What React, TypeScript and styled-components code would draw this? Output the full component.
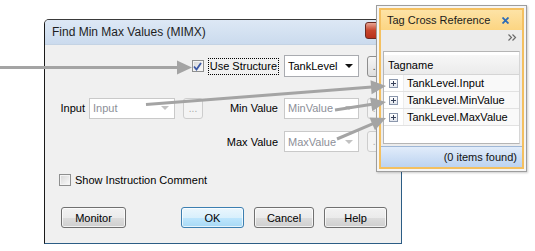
import React from 'react'
import styled, { createGlobalStyle } from 'styled-components'

const GlobalStyle = createGlobalStyle`
  *, *::before, *::after {
    box-sizing: border-box;
  }
  html, body {
    margin: 0;
    padding: 0;
    background: #fff;
  }
  body {
    font-family: "Liberation Sans", Arial, sans-serif;
    font-size: 11px;
    color: #000;
  }
`

const Desktop = styled.div`
  position: relative;
  width: 535px;
  height: 251px;
  overflow: hidden;
  background: #fff;
`

const Dialog = styled.div`
  margin: 19px 0 0 44px;
  width: 358px;
  height: 225px;
  border: 1px solid #2c5d85;
  border-left-color: #1a1a1a;
  border-top-color: #3a3a3a;
  border-radius: 5px 5px 0 0;
  background: #f0f0f0;
  display: flex;
  flex-direction: column;
  overflow: hidden;
`

const TitleBar = styled.div`
  height: 25px;
  flex: none;
  display: flex;
  align-items: center;
  justify-content: space-between;
  padding-left: 7px;
  background: linear-gradient(#dde8f5, #cbdbee);
  border-bottom: 1px solid #c4d3e4;
`

const TitleText = styled.span`
  font-size: 12px;
  color: #1e1e1e;
`

const CloseBox = styled.div`
  width: 30px;
  height: 17px;
  margin: -4px 6px 0 0;
  border: 1px solid #6b2a22;
  border-radius: 3px;
  background: linear-gradient(#e8a493, #c7452c 50%, #b8321c);
`

const Fields = styled.div`
  padding: 10px 14px 0 0;
`

const FieldRow = styled.div<{ $gap: number; $height: number }>`
  display: grid;
  grid-template-columns: 44px 86px 8px 20px 1fr 75px 8px 20px;
  height: ${p => p.$height}px;
  margin-top: ${p => p.$gap}px;
  align-items: center;
`

const Label = styled.span`
  justify-self: end;
  padding-right: 6px;
  white-space: nowrap;
`

const InputLabel = styled(Label)`
  padding-right: 4px;
`

const StructureCheck = styled.label`
  grid-column: 1 / 6;
  justify-self: end;
  margin-right: 5px;
  display: flex;
  align-items: center;
  gap: 4px;
`

const Focused = styled.span`
  border: 1px dotted #000;
  padding: 0 1px;
  line-height: 15px;
`

const Box = styled.span`
  width: 12px;
  height: 12px;
  flex: none;
  border: 1px solid #8e8f8f;
  background: linear-gradient(135deg, #d6d6d6, #fbfbfb);
  box-shadow: inset 0 0 0 1px #f4f4f4;
  display: flex;
  align-items: center;
  justify-content: center;
`

const Combo = styled.div<{ $disabled?: boolean }>`
  height: ${p => (p.$disabled ? 21 : 22)}px;
  width: 100%;
  border: 1px solid ${p => (p.$disabled ? '#c9c9c9' : '#a9abb0')};
  background: #fff;
  display: flex;
  align-items: center;
  justify-content: space-between;
  padding: 0 5px 0 3px;
  color: ${p => (p.$disabled ? '#8d8f98' : '#000')};
`

const Caret = styled.span<{ $disabled?: boolean }>`
  width: 0;
  height: 0;
  border-left: 4px solid transparent;
  border-right: 4px solid transparent;
  border-top: 4px solid ${p => (p.$disabled ? '#c2c2c2' : '#111')};
`

const Ellipsis = styled.div<{ $disabled?: boolean }>`
  width: 20px;
  height: 21px;
  border: 1px solid ${p => (p.$disabled ? '#cdcdcd' : '#8e8e8e')};
  border-radius: 3px;
  background: ${p => (p.$disabled ? '#f4f4f4' : 'linear-gradient(#f6f6f6, #dedede)')};
  color: ${p => (p.$disabled ? '#a8a8a8' : '#333')};
  display: flex;
  align-items: flex-end;
  justify-content: center;
  padding-bottom: 4px;
  font-size: 10px;
  line-height: 10px;
`

const CommentRow = styled.label`
  display: flex;
  align-items: center;
  gap: 4px;
  margin: 21px 0 0 14px;
  height: 14px;
`

const ButtonRow = styled.div`
  display: flex;
  align-items: center;
  margin: 20px 14px 0 16px;
`

const ButtonGroup = styled.div`
  margin-left: auto;
  display: flex;
  gap: 10px;
`

const Button = styled.div<{ $width: number; $primary?: boolean }>`
  width: ${p => p.$width}px;
  height: 21px;
  border: 1px solid ${p => (p.$primary ? '#3c7fb1' : '#707070')};
  border-radius: 3px;
  background: ${p =>
    p.$primary
      ? 'linear-gradient(#eaf6fd 0%, #d9f0fc 50%, #bee6fd 51%, #a7d9f5 100%)'
      : 'linear-gradient(#f2f2f2 0%, #ebebeb 50%, #dddddd 51%, #cfcfcf 100%)'};
  box-shadow: inset 0 0 0 1px rgba(255, 255, 255, 0.7);
  display: flex;
  align-items: center;
  justify-content: center;
`

/* floating Tag Cross Reference window */

const TagWindow = styled.div`
  position: absolute;
  left: 376px;
  top: 5px;
  width: 151px;
  height: 167px;
  border: 1px solid #9d9d9d;
  padding: 2px;
  background: #f5f5f5;
  box-shadow: 1px 1px 2px rgba(0, 0, 0, 0.2);
  z-index: 2;
`

const TagInner = styled.div`
  height: 100%;
  border: 2px solid #f4c060;
  background: #ececec;
  display: flex;
  flex-direction: column;
`

const TagHeader = styled.div`
  height: 20px;
  flex: none;
  background: linear-gradient(#fde3a6, #fcd582);
  display: flex;
  align-items: center;
  justify-content: space-between;
  padding: 0 13px 0 6px;
  color: #1b1b1b;
`

const TagToolbar = styled.div`
  height: 15px;
  flex: none;
  display: flex;
  justify-content: flex-end;
  align-items: center;
  padding-right: 5px;
`

const TagList = styled.div`
  margin: 6px 2px 0 2px;
  flex: 1;
  border: 1px solid #b5b5b5;
  border-right-color: #d6d6d6;
  background: #fff;
  padding-top: 3px;
  display: flex;
  flex-direction: column;
`

const TagHead = styled.div`
  height: 20px;
  display: flex;
  align-items: center;
  padding-left: 4px;
  background: linear-gradient(#f7f7f7, #ebebeb);
  border-bottom: 1px solid #d5d5d5;
`

const TagRow = styled.div`
  height: 17px;
  display: flex;
  align-items: center;
  border-bottom: 1px solid #e2e2e2;
`

const PlusCell = styled.div`
  width: 19px;
  display: flex;
  justify-content: center;
`

const PlusBox = styled.span`
  position: relative;
  width: 9px;
  height: 9px;
  border: 1px solid #8b97ac;
  background: linear-gradient(#fff, #e3e7ee);
  &::before,
  &::after {
    content: '';
    position: absolute;
    background: #37415a;
  }
  &::before {
    left: 1px;
    right: 1px;
    top: 3px;
    height: 1px;
  }
  &::after {
    top: 1px;
    bottom: 1px;
    left: 3px;
    width: 1px;
  }
`

const RowText = styled.div`
  flex: 1;
  padding-left: 3px;
  height: 100%;
  display: flex;
  align-items: center;
  background: #f9f9f9;
  border-left: 1px solid #ededed;
`

const TagFooter = styled.div`
  height: 21px;
  flex: none;
  margin-top: 2px;
  display: flex;
  align-items: center;
  justify-content: flex-end;
  padding-right: 5px;
  background: linear-gradient(#e1ecfa, #bcd3f1);
  border-top: 1px solid #9fb7d6;
  color: #111;
`

const Overlay = styled.svg`
  position: absolute;
  left: 0;
  top: 0;
  z-index: 3;
  pointer-events: none;
`

type Arrow = { x1: number; y1: number; x2: number; y2: number }

const arrows: Arrow[] = [
  { x1: 0, y1: 67.5, x2: 192, y2: 67.5 },
  { x1: 146, y1: 104.5, x2: 386, y2: 86 },
  { x1: 335, y1: 110, x2: 386, y2: 102 },
  { x1: 337, y1: 139, x2: 386, y2: 118 },
]

const ArrowShape = ({ x1, y1, x2, y2 }: Arrow) => {
  const len = Math.hypot(x2 - x1, y2 - y1)
  const ux = (x2 - x1) / len
  const uy = (y2 - y1) / len
  const hl = 15
  const hw = 7
  const bx = x2 - ux * hl
  const by = y2 - uy * hl
  const pts = `${x2},${y2} ${bx - uy * hw},${by + ux * hw} ${bx + uy * hw},${by - ux * hw}`
  return (
    <g>
      <line x1={x1} y1={y1} x2={bx + ux} y2={by + uy} stroke="#a4a4a4" strokeWidth={3} />
      <polygon points={pts} fill="#a4a4a4" />
    </g>
  )
}

const Check = () => (
  <svg width="9" height="9" viewBox="0 0 9 9">
    <path d="M1 4.5 L3.5 7.5 L8 1" fill="none" stroke="#3b58a5" strokeWidth="1.8" />
  </svg>
)

const CloseX = () => (
  <svg width="7" height="7" viewBox="0 0 7 7">
    <path d="M0.5 0.5 L6.5 6.5 M6.5 0.5 L0.5 6.5" stroke="#2f6cb5" strokeWidth="1.8" />
  </svg>
)

const More = () => (
  <svg width="9" height="7" viewBox="0 0 9 7">
    <path d="M0.5 0.5 L3.5 3.5 L0.5 6.5 M4.5 0.5 L7.5 3.5 L4.5 6.5" fill="none" stroke="#6a6a6a" strokeWidth="1.2" />
  </svg>
)

const tags = ['TankLevel.Input', 'TankLevel.MinValue', 'TankLevel.MaxValue']

export default function App() {
  return (
    <Desktop>
      <GlobalStyle />
      <Dialog>
        <TitleBar>
          <TitleText>Find Min Max Values (MIMX)</TitleText>
          <CloseBox />
        </TitleBar>

        <Fields>
          <FieldRow $gap={0} $height={22}>
            <StructureCheck>
              <Box>
                <Check />
              </Box>
              <Focused>Use Structure</Focused>
            </StructureCheck>
            <Combo>
              TankLevel
              <Caret />
            </Combo>
            <span />
            <Ellipsis>...</Ellipsis>
          </FieldRow>

          <FieldRow $gap={20} $height={22}>
            <InputLabel>Input</InputLabel>
            <Combo $disabled>
              Input
              <Caret $disabled />
            </Combo>
            <span />
            <Ellipsis $disabled>...</Ellipsis>
            <Label>Min Value</Label>
            <Combo $disabled>
              MinValue
              <Caret $disabled />
            </Combo>
            <span />
            <Ellipsis $disabled>...</Ellipsis>
          </FieldRow>

          <FieldRow $gap={12} $height={21}>
            <span />
            <span />
            <span />
            <span />
            <Label>Max Value</Label>
            <Combo $disabled>
              MaxValue
              <Caret $disabled />
            </Combo>
            <span />
            <Ellipsis $disabled>...</Ellipsis>
          </FieldRow>
        </Fields>

        <CommentRow>
          <Box />
          Show Instruction Comment
        </CommentRow>

        <ButtonRow>
          <Button $width={65}>Monitor</Button>
          <ButtonGroup>
            <Button $width={63} $primary>OK</Button>
            <Button $width={60}>Cancel</Button>
            <Button $width={63}>Help</Button>
          </ButtonGroup>
        </ButtonRow>
      </Dialog>

      <TagWindow>
        <TagInner>
          <TagHeader>
            Tag Cross Reference
            <CloseX />
          </TagHeader>
          <TagToolbar>
            <More />
          </TagToolbar>
          <TagList>
            <TagHead>Tagname</TagHead>
            {tags.map(t => (
              <TagRow key={t}>
                <PlusCell>
                  <PlusBox />
                </PlusCell>
                <RowText>{t}</RowText>
              </TagRow>
            ))}
          </TagList>
          <TagFooter>(0 items found)</TagFooter>
        </TagInner>
      </TagWindow>

      <Overlay width={535} height={251}>
        {arrows.map((a, i) => (
          <ArrowShape key={i} {...a} />
        ))}
      </Overlay>
    </Desktop>
  )
}
